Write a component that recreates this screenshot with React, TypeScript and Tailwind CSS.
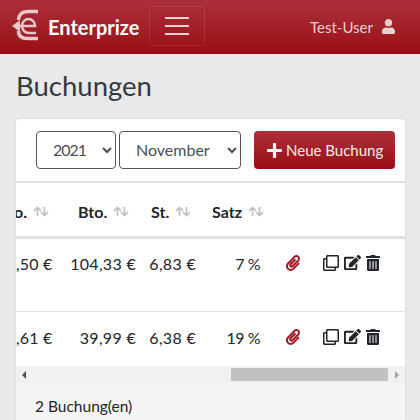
import React from "react";
import { FaEdit, FaPaperclip, FaPlus, FaRegClone, FaTrashAlt, FaUser } from "react-icons/fa";

const font = "font-['Lato','Liberation_Sans',sans-serif]";

const SortArrows = () => (
  <svg width="16" height="11" viewBox="0 0 16 11" fill="none" stroke="#bdbdbd" strokeWidth="1.6" className="ml-[6px] shrink-0">
    <path d="M4.500 10V1.500M1 5l3.500-3.500L8 5" />
    <path d="M11.500 1v8.500M8 6l3.500 3.500L15 6" />
  </svg>
);

const Logo = () => (
  <svg width="28" height="32" viewBox="0 0 28 32" fill="none" stroke="#eedcdd" className="mb-[4px] shrink-0 opacity-90">
    <path d="M27 2.500H17C10 2.500 7.500 7 7.500 11" strokeWidth="3.500" />
    <path d="M27 29.500H17C10 29.500 7.500 26 7.500 22" strokeWidth="3.500" />
    <path d="M1 17l8-6v12z" fill="#eedcdd" stroke="none" />
    <path d="M9 17h15c0-4-3-7-6.500-7S11 13 11 17s3 7 7 7h7" strokeWidth="2.500" />
  </svg>
);

const Row = ({ a, b, c, d, h }: { a: string; b: string; c: string; d: string; h: string }) => (
  <div className={`grid ${h} grid-cols-[46px_77px_61px_74px_38px_93px] items-start text-[16px] text-[#212529]`}>
    <div className="overflow-hidden pr-[15px] text-right tracking-[0.2px] whitespace-nowrap">{a}</div>
    <div className="pr-[3px] text-right tracking-[0.3px] whitespace-nowrap">{b}</div>
    <div className="pr-[4px] text-right tracking-[0.3px] whitespace-nowrap">{c}</div>
    <div className="pr-[14px] text-right tracking-[-0.5px] whitespace-nowrap">{d}</div>
    <div className="pt-[3px] pl-[11px]">
      <FaPaperclip className="text-[16px] text-[#a51722]" />
    </div>
    <div className="flex items-center gap-[4px] pt-[2px] pl-[11px] text-[16px] text-[#212529]">
      <FaRegClone />
      <FaEdit className="ml-[1px] text-[17px]" />
      <FaTrashAlt />
    </div>
  </div>
);

export default function App() {
  return (
    <div className={`${font} h-[420px] w-[420px] overflow-hidden bg-[#e9e9e9]`}>
      <nav className="flex h-[54px] items-center bg-gradient-to-b from-[#ab2f39] to-[#9a0a14] pr-[24px] pl-[11px]">
        <Logo />
        <span className="ml-[9px] text-[20px] font-bold text-white">Enterprize</span>
        <button className="mb-[2px] ml-[9px] flex h-[40px] w-[56px] flex-col items-center justify-center gap-[6px] rounded border border-white/10">
          <span className="h-[2px] w-[24px] bg-[#eccfd1]" />
          <span className="h-[2px] w-[24px] bg-[#eccfd1]" />
          <span className="h-[2px] w-[24px] bg-[#eccfd1]" />
        </button>
        <span className="ml-auto text-[15px] text-[#eccfd1]">Test-User</span>
        <FaUser className="mb-[2px] ml-[8px] text-[15px] text-[#eccfd1]" />
      </nav>

      <main className="pl-[16px]">
        <h1 className="mt-[14px] mb-[15px] text-[27.500px] leading-[36px] text-[#343a40]">Buchungen</h1>

        <div className="w-[389px] overflow-hidden rounded-t bg-white shadow-[0_0_2px_rgba(0,0,0,0.12)]">
          <div className="flex h-[64px] items-center gap-[3px] border-b-2 border-[#e3e3e3] pl-[20px]">
            <select className="h-[38px] w-[80px] rounded border border-[#555] bg-white pb-[1px] pl-[12px] text-[16px] tracking-[-1px] text-[#495057]">
              <option>2021</option>
            </select>
            <select className="h-[38px] w-[122px] rounded border border-[#555] bg-white pb-[1px] pl-[12px] text-[16px] text-[#495057]">
              <option>November</option>
            </select>
            <button className="ml-[10px] flex h-[38px] w-[141px] items-center gap-[3px] rounded bg-gradient-to-b from-[#ab2f39] to-[#9a0a14] pl-[12px] text-[15px] text-[#f8ecec]">
              <FaPlus className="text-[17px] text-white" />
              Neue Buchung
            </button>
          </div>

          <div className="grid h-[56px] grid-cols-[46px_77px_61px_74px_131px] items-center border-b-[3px] border-[#dee2e6] pt-[4px] text-[16px] font-bold text-[#212529]">
            <div className="flex items-center justify-end overflow-hidden pr-[13px]">
              <span>o.</span>
              <SortArrows />
            </div>
            <div className="flex items-center pl-[16px]">
              Bto.
              <SortArrows />
            </div>
            <div className="flex items-center pl-[12px]">
              St.
              <SortArrows />
            </div>
            <div className="flex items-center pl-[12px]">
              Satz
              <SortArrows />
            </div>
            <div />
          </div>

          <div className="border-b border-[#dee2e6]">
            <Row h="h-[72px] pt-[13px]" a=",50 €" b="104,33 €" c="6,83 €" d="7 %" />
          </div>
          <Row h="h-[54px] pt-[14px]" a=",61 €" b="39,99 €" c="6,38 €" d="19 %" />

          {/* scrollbar */}
          <div className="flex h-[17px] items-center bg-[#f1f1f1]">
            <span className="ml-[6px] h-0 w-0 border-y-[4px] border-r-[4px] border-y-transparent border-r-[#505050]" />
            <div className="ml-auto h-[13px] w-[157px] bg-[#c1c1c1]" />
            <span className="mr-[6px] ml-[7px] h-0 w-0 border-y-[4px] border-l-[4px] border-y-transparent border-l-[#a3a3a3]" />
          </div>

          <div className="h-[37px] bg-[#f5f5f5] pt-[12px] pl-[19px] text-[15.500px] text-[#212529]">2 Buchung(en)</div>
        </div>
      </main>
    </div>
  );
}
